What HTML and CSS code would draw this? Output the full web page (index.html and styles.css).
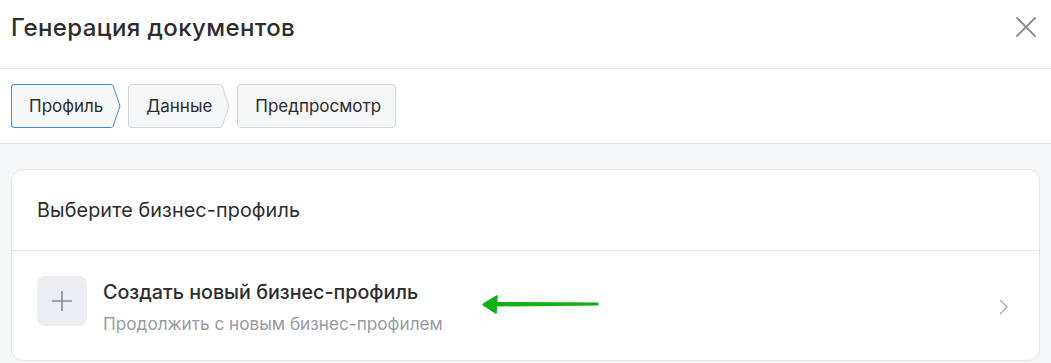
FILE: index.html
```html
<!DOCTYPE html>
<html lang="ru">
<head>
    <meta charset="UTF-8">
    <meta name="viewport" content="width=device-width, initial-scale=1.0">
    <title>Генерация документов</title>
    <link rel="stylesheet" href="styles.css">
</head>
<body>
    <div class="modal">
        <div class="modal-header">
            <h1>Генерация документов</h1>
            <button class="close-btn" aria-label="Закрыть">
                <svg width="20" height="20" viewBox="0 0 20 20">
                    <path d="M1 1 L19 19 M19 1 L1 19" stroke="#8a8b8f" stroke-width="1.8" stroke-linecap="round"/>
                </svg>
            </button>
        </div>

        <div class="steps">
            <div class="step active">
                <span class="step-body">Профиль</span>
                <svg class="step-arrow" width="11" height="44" viewBox="0 0 11 44">
                    <path d="M0 0.5 H1.5 Q2.5 0.5 3 1.5 L10 22 L3 42.5 Q2.5 43.5 1.5 43.5 H0" fill="#f7f8fa" stroke="#3f8ae0" stroke-width="1"/>
                </svg>
            </div>
            <div class="step">
                <span class="step-body">Данные</span>
                <svg class="step-arrow" width="11" height="44" viewBox="0 0 11 44">
                    <path d="M0 0.5 H1.5 Q2.5 0.5 3 1.5 L10 22 L3 42.5 Q2.5 43.5 1.5 43.5 H0" fill="#f5f6f8" stroke="#d3d5da" stroke-width="1"/>
                </svg>
            </div>
            <div class="step last">
                <span class="step-body">Предпросмотр</span>
            </div>
        </div>

        <div class="content">
            <div class="card">
                <div class="card-header">Выберите бизнес-профиль</div>
                <div class="card-row">
                    <div class="plus-box">
                        <svg width="22" height="22" viewBox="0 0 22 22">
                            <path d="M11 1 V21 M1 11 H21" stroke="#8a8b8f" stroke-width="1.6"/>
                        </svg>
                    </div>
                    <div class="row-text">
                        <div class="row-title">Создать новый бизнес-профиль</div>
                        <div class="row-sub">Продолжить с новым бизнес-профилем</div>
                    </div>
                    <svg class="chevron" width="10" height="16" viewBox="0 0 10 16">
                        <path d="M1.5 1.5 L8 8 L1.5 14.5" fill="none" stroke="#aab3c2" stroke-width="1.5" stroke-linecap="round" stroke-linejoin="round"/>
                    </svg>
                    <!-- annotation arrow -->
                    <svg class="pointer" width="120" height="22" viewBox="0 0 120 22">
                        <path d="M14 9 L116 9.5 Q117.5 11 116 12.5 L14 13.5 Z" fill="#0fb014"/>
                        <path d="M1 11.5 L15 3 L14 20 Z" fill="#0fb014" stroke="#0fb014" stroke-width="1.5" stroke-linejoin="round"/>
                    </svg>
                </div>
            </div>
        </div>
    </div>
</body>
</html>
```

FILE: styles.css
```css
body {
    margin: 0;
    padding: 0;
    font-family: Inter, "Noto Sans", Arial, sans-serif;
    background-color: #ffffff;
    color: #2c2d2e;
}
.modal {
    width: 1051px;
    height: 363px;
    overflow: hidden;
    display: flex;
    flex-direction: column;
}
.modal-header {
    height: 69px;
    flex-shrink: 0;
    box-sizing: border-box;
    padding: 0 15px 0 11px;
    border-bottom: 1px solid #e5e6ea;
    display: flex;
    justify-content: space-between;
    align-items: flex-start;
}
.modal-header h1 {
    margin: 13px 0 0;
    font-size: 24px;
    line-height: 30px;
    font-weight: 500;
    letter-spacing: 0.4px;
    color: #2c2d2e;
}
.close-btn {
    margin-top: 17px;
    padding: 0;
    border: none;
    background: none;
    cursor: pointer;
    line-height: 0;
}
.steps {
    display: flex;
    flex-shrink: 0;
    gap: 7px;
    padding: 15px 11px 15px;
    border-bottom: 1px solid #e5e6ea;
}
.step {
    display: flex;
    height: 44px;
}
.step-body {
    display: flex;
    align-items: center;
    box-sizing: border-box;
    height: 44px;
    padding: 0 7px 0 17px;
    font-size: 17px;
    color: #2c2d2e;
    background: #f5f6f8;
    border: 1px solid #d3d5da;
    border-right: none;
    border-radius: 4px 0 0 4px;
}
.step.active .step-body {
    background: #f7f8fa;
    border-color: #3f8ae0;
}
.step.last .step-body {
    padding: 0 14px 0 17px;
    border-right: 1px solid #d3d5da;
    border-radius: 4px;
}
.step-arrow {
    display: block;
}
.content {
    flex: 1;
    background: #f5f6f8;
    padding: 25px 11px 0;
}
.card {
    background: #ffffff;
    border: 1px solid #e3e5e9;
    border-radius: 12px;
}
.card-header {
    height: 81px;
    box-sizing: border-box;
    padding: 0 25px;
    display: flex;
    align-items: center;
    font-size: 19.8px;
    letter-spacing: 0.1px;
    border-bottom: 1px solid #e5e6ea;
    color: #2c2d2e;
}
.card-row {
    position: relative;
    display: flex;
    align-items: flex-start;
    padding: 25px 30px 26px 25px;
}
.plus-box {
    width: 50px;
    height: 50px;
    border-radius: 8px;
    background: #edeef1;
    display: flex;
    align-items: center;
    justify-content: center;
    flex-shrink: 0;
}
.row-text {
    flex: 1;
    margin-left: 16px;
    margin-top: 4px;
    display: flex;
    flex-direction: column;
    gap: 9px;
}
.row-title {
    font-size: 19.7px;
    line-height: 24px;
    font-weight: 500;
    color: #2c2d2e;
}
.row-sub {
    font-size: 17.2px;
    line-height: 21px;
    color: #999ca3;
}
.chevron {
    display: block;
    margin-top: 23px;
}
.pointer {
    position: absolute;
    left: 470px;
    top: 42px;
}
```
